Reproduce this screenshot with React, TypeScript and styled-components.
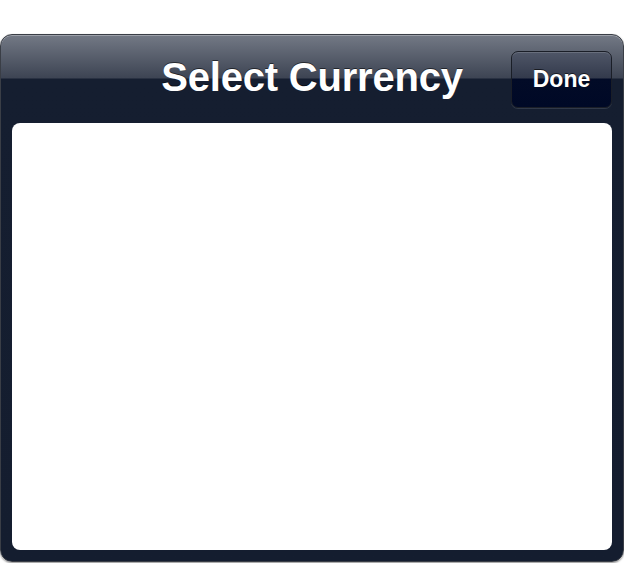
import styled, { createGlobalStyle } from 'styled-components';

const GlobalStyle = createGlobalStyle`
  html, body {
    margin: 0;
    padding: 0;
    background: #ffffff;
    font-family: "Liberation Sans", Arial, sans-serif;
  }
`;

const Page = styled.div`
  padding-top: 34px;
  width: 624px;
  height: 563px;
  box-sizing: border-box;
`;

const Popover = styled.div`
  height: 528px;
  box-sizing: border-box;
  display: flex;
  flex-direction: column;
  border: 1px solid #3a3e46;
  border-radius: 12px;
  background: linear-gradient(
    to bottom,
    #737985 0px,
    #3d4453 43px,
    #151e30 44px,
    #141d2f 100%
  );
  box-shadow: inset 0 1px 0 rgba(255, 255, 255, 0.3), 0 1px 2px rgba(0, 0, 0, 0.45);
`;

const Header = styled.div`
  height: 88px;
  flex: none;
  display: grid;
  grid-template-columns: 1fr auto 1fr;
  align-items: center;
  padding: 0 11px;
`;

const Title = styled.h1`
  grid-column: 2;
  margin: 0;
  font-size: 40px;
  line-height: 1;
  font-weight: 700;
  letter-spacing: -0.2px;
  color: #ffffff;
  text-shadow: 0 -1px 0 rgba(0, 0, 0, 0.55);
  padding-bottom: 4px;
`;

const DoneButton = styled.button`
  grid-column: 3;
  justify-self: end;
  width: 101px;
  height: 57px;
  border: 1px solid #1a1e27;
  border-radius: 7px;
  background: linear-gradient(
    to bottom,
    #4f5667 0px,
    #333a4c 26px,
    #020b27 27px,
    #000926 100%
  );
  box-shadow: 0 1px 0 rgba(255, 255, 255, 0.12), inset 0 1px 0 rgba(255, 255, 255, 0.15);
  color: #ffffff;
  font-family: "Liberation Sans", Arial, sans-serif;
  font-size: 23px;
  font-weight: 700;
  text-shadow: 0 -1px 0 rgba(0, 0, 0, 0.6);
  padding: 0;
  cursor: pointer;
`;

const Content = styled.div`
  flex: 1;
  margin: 0 11px 11px;
  background: #ffffff;
  border-radius: 8px;
`;

export default function App() {
  return (
    <>
      <GlobalStyle />
      <Page>
        <Popover>
          <Header>
            <Title>Select Currency</Title>
            <DoneButton>Done</DoneButton>
          </Header>
          <Content />
        </Popover>
      </Page>
    </>
  );
}
